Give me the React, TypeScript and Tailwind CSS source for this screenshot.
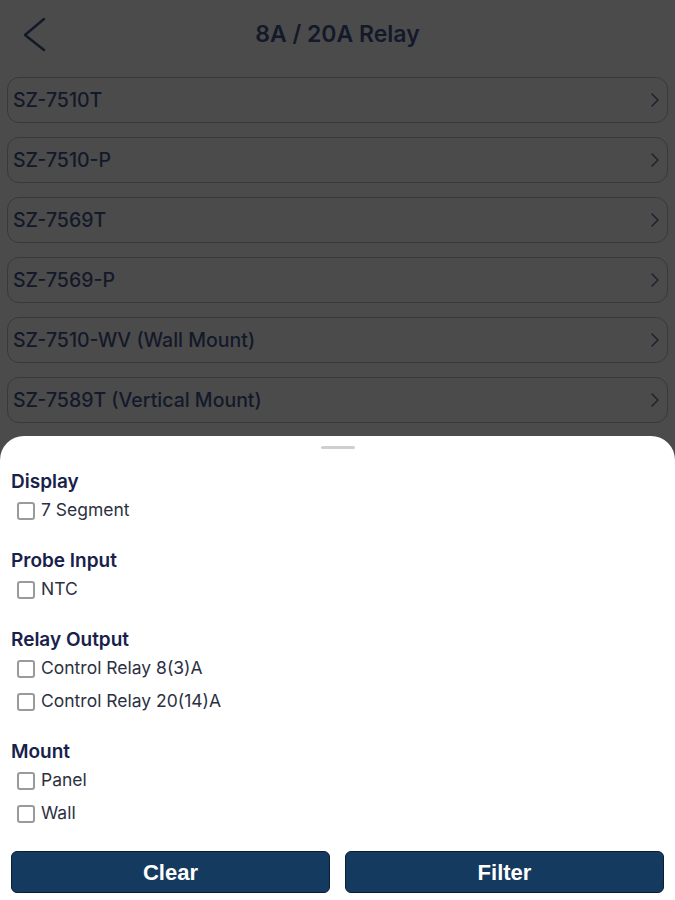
const products = [
  "SZ-7510T",
  "SZ-7510-P",
  "SZ-7569T",
  "SZ-7569-P",
  "SZ-7510-WV (Wall Mount)",
  "SZ-7589T (Vertical Mount)",
];

const filters = [
  { title: "Display", options: ["7 Segment"] },
  { title: "Probe Input", options: ["NTC"] },
  { title: "Relay Output", options: ["Control Relay 8(3)A", "Control Relay 20(14)A"] },
  { title: "Mount", options: ["Panel", "Wall"] },
];

const App = () => {
  return (
    <div className="h-[900px] w-[675px] overflow-hidden flex flex-col bg-[#4b4b4b] font-['Inter',sans-serif]">
      {/* dimmed page behind the sheet */}
      <div className="h-[436px] shrink-0 flex flex-col">
        <div className="h-[77px] shrink-0 relative flex items-center justify-center pb-[8px]">
          <svg className="absolute left-[22px] top-[16px]" width="26" height="38" viewBox="0 0 26 38" fill="none">
            <polyline points="22,3 3,19 22,34" stroke="#14192a" strokeWidth="2.4" strokeLinecap="round" strokeLinejoin="round" />
          </svg>
          <h1 className="text-[23px] font-semibold text-[#14192a]">8A / 20A Relay</h1>
        </div>
        <div className="flex flex-col gap-[14px] px-[7px]">
          {products.map((p) => (
            <div
              key={p}
              className="h-[46px] flex items-center justify-between rounded-[12px] border-[1.5px] border-[#393939] pl-[5px] pr-[7px]"
            >
              <span className="text-[19.5px] font-medium text-[#14192a] pt-[2px]">{p}</span>
              <svg width="10" height="16" viewBox="0 0 10 16" fill="none">
                <polyline points="2,2 8,8 2,14" stroke="#1e2230" strokeWidth="1.5" strokeLinecap="round" strokeLinejoin="round" />
              </svg>
            </div>
          ))}
        </div>
      </div>

      {/* bottom sheet */}
      <div className="flex-1 bg-white rounded-t-[24px] flex flex-col pt-[10px]">
        <div className="mx-auto h-[3px] w-[34px] rounded-full bg-[#cfcfcf]" />
        <div className="flex flex-col gap-[22px] px-[11px] pt-[21px]">
          {filters.map((f) => (
            <div key={f.title} className="flex flex-col">
              <div className="h-[24px] flex items-center text-[19px] font-semibold text-[#17214a]">
                {f.title}
              </div>
              {f.options.map((o) => (
                <label key={o} className="h-[33px] flex items-center gap-[6px] pl-[6px]">
                  <span className="w-[18px] h-[18px] rounded-[3px] border-2 border-[#9a9a9a] bg-white" />
                  <span className="text-[17.5px] text-[#2c3142]">{o}</span>
                </label>
              ))}
            </div>
          ))}
        </div>
        <div className="flex gap-[15px] px-[11px] pt-[21px]">
          <button className="flex-1 h-[42px] rounded-[6px] border-[1.5px] border-[#0b1f33] bg-[#153a5f] text-white text-[22px] font-bold font-['Liberation_Sans',sans-serif]">
            Clear
          </button>
          <button className="flex-1 h-[42px] rounded-[6px] border-[1.5px] border-[#0b1f33] bg-[#153a5f] text-white text-[22px] font-bold font-['Liberation_Sans',sans-serif]">
            Filter
          </button>
        </div>
      </div>
    </div>
  );
};

export default App;
